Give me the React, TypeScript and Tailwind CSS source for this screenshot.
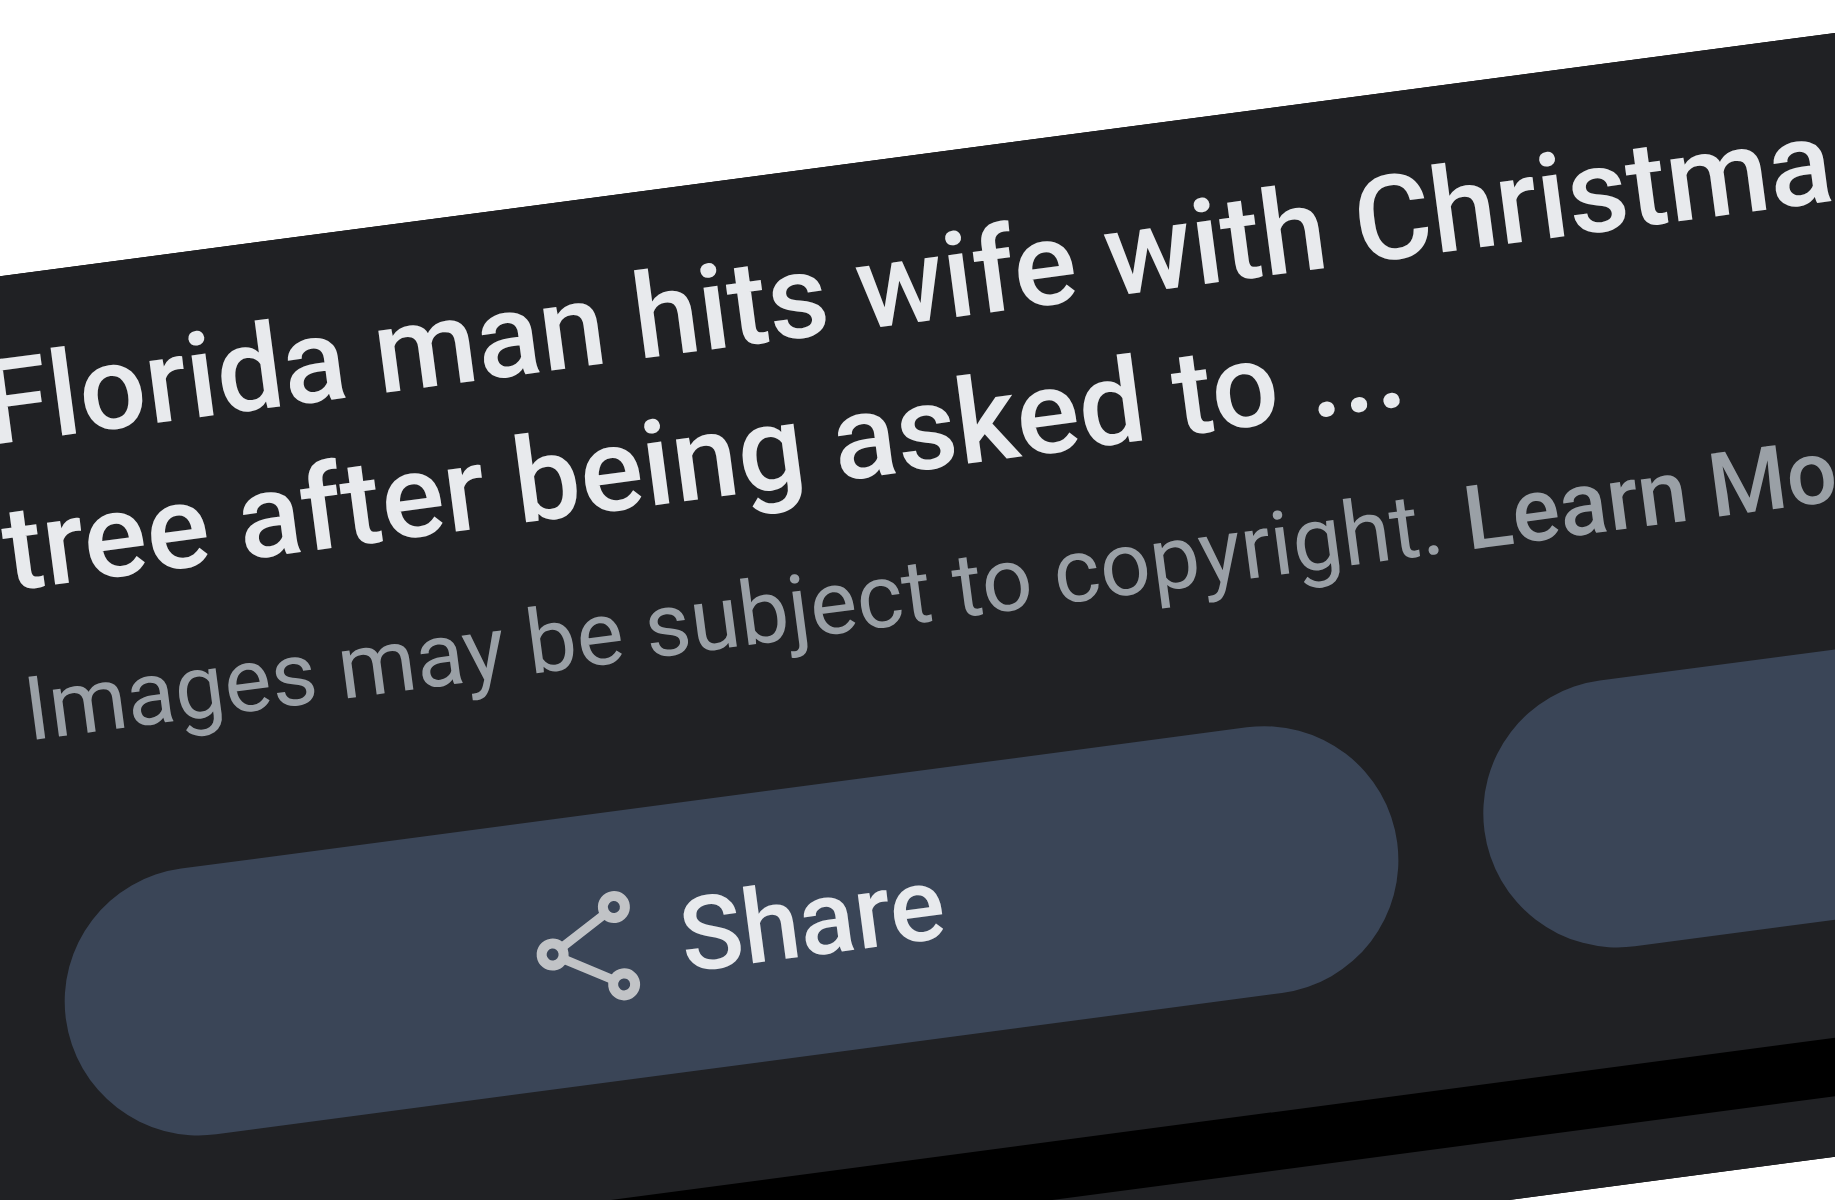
import React from "react";

const ShareIcon = () => (
  <svg
    className="h-[147px] w-[147px] shrink-0 text-[#c1c3c6]"
    viewBox="0 0 147 147"
    fill="none"
    stroke="currentColor"
    strokeWidth="10"
    aria-hidden="true"
  >
    <circle cx="38" cy="73" r="11" />
    <circle cx="105" cy="34" r="11" />
    <circle cx="105" cy="112" r="11" />
    <path strokeWidth="9" d="M47.5 67.5 95.5 39.5M47.5 78.5 95.5 106.5" />
  </svg>
);

const App = () => {
  return (
    <main className="h-screen overflow-hidden bg-white">
      {/* Tilted result card */}
      <div className="mt-[296px] -ml-[149px] w-[164%] origin-top-left rotate-[-7.55deg] bg-black font-['Roboto',sans-serif]">
        <section className="bg-[#202124] px-[118px] pt-[53px] pb-[117px]">
          <h1 className="text-[118px] leading-[147px] font-medium text-[#e8eaed]">
            Florida man hits wife with Christmas
            <br />
            tree after being asked to ...
          </h1>

          <p className="mt-7 text-[89px] leading-[117px] text-[#9aa0a6]">
            Images may be subject to copyright.{" "}
            <a href="#" className="font-medium">Learn More</a>
          </p>

          <div className="mt-[119px] grid grid-cols-2 gap-[88px]">
            <button className="flex h-[268px] items-center justify-center gap-5 rounded-full bg-[#3a4557] pr-1 text-[103px] font-medium text-[#e8eaed]">
              <ShareIcon />
              Share
            </button>
            <button aria-label="Save" className="h-[268px] rounded-full bg-[#3a4557]" />
          </div>
        </section>

        {/* Next section starts below the divider */}
        <div className="mt-[58px] h-[60px] bg-[#202124]" />
      </div>
    </main>
  );
};

export default App;
